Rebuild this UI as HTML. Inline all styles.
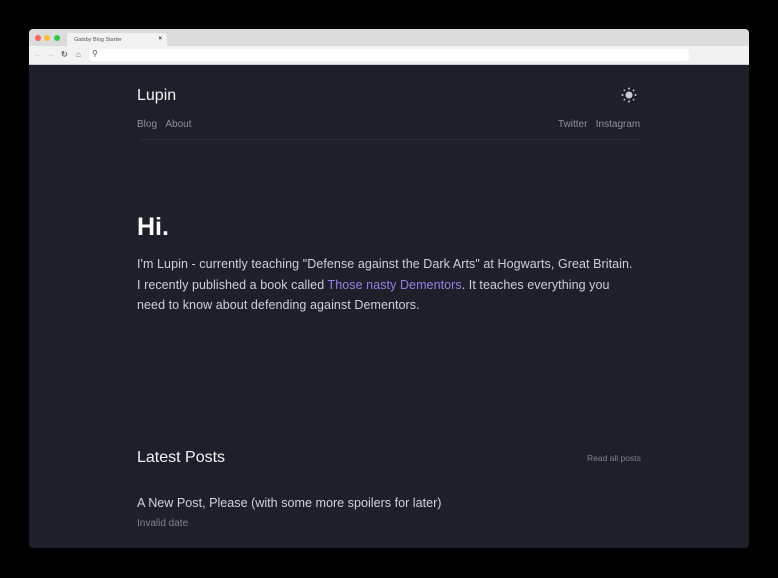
<!DOCTYPE html>
<html><head><style>
*{margin:0;padding:0;box-sizing:border-box}
body{width:778px;height:578px;background:#000;font-family:"Liberation Sans",sans-serif;position:relative;overflow:hidden}
.win{position:absolute;left:29px;top:29px;width:720px;height:519px;background:#1d202b;border-radius:4px;overflow:hidden}
.tabs{height:17px;background:#dcdcdc;position:relative}
.dot{position:absolute;top:6px;width:6px;height:6px;border-radius:50%}
.tab{position:absolute;left:38px;top:4px;width:100px;height:13px;background:#f2f2f2;border-radius:3px 3px 0 0;font-size:5.5px;color:#555;padding:4px 0 0 7px}
.tab b{position:absolute;right:5px;top:3px;font-size:6px;color:#333}
.bar{height:19px;background:#f2f2f2;position:relative;border-bottom:1px solid #ccc}
.url{position:absolute;left:60px;top:3px;width:600px;height:12px;background:#fff;border-radius:3px}
.ic{position:absolute;top:4px;font-size:8px;color:#666}
.a{position:absolute;color:#e6e6e6}
.m{color:#8a909e;font-size:10px}
</style></head><body>
<div class="win">
<div class="tabs">
<div class="dot" style="left:6px;background:#fc605c"></div>
<div class="dot" style="left:15px;background:#fdbc40"></div>
<div class="dot" style="left:25px;background:#34c84a"></div>
<div class="tab">Gatsby Blog Starter<b>×</b></div>
</div>
<div class="bar">
<span class="ic" style="left:5px;color:#bbb">←</span>
<span class="ic" style="left:18px;color:#bbb">→</span>
<span class="ic" style="left:32px;font-weight:bold">↻</span>
<span class="ic" style="left:47px">⌂</span>
<div class="url"><span style="position:absolute;left:3px;top:0;font-size:8px;color:#555">⚲</span></div>
</div>
</div>
<div class="a" style="left:137px;top:87px;font-size:16px;color:#f2f2f2">Lupin</div>
<svg style="position:absolute;left:621px;top:87px" width="16" height="16" viewBox="0 0 16 16"><circle cx="8" cy="8" r="3.5" fill="#c8ccd4"/><g fill="#c8ccd4"><circle cx="8" cy="1.5" r="1"/><circle cx="8" cy="14.5" r="1"/><circle cx="1.5" cy="8" r="1"/><circle cx="14.5" cy="8" r="1"/><circle cx="3.4" cy="3.4" r="0.9"/><circle cx="12.6" cy="3.4" r="0.9"/><circle cx="3.4" cy="12.6" r="0.9"/><circle cx="12.6" cy="12.6" r="0.9"/></g></svg>
<div class="a m" style="left:137px;top:119px">Blog&nbsp;&nbsp;&nbsp;About</div>
<div class="a m" style="left:558px;top:119px">Twitter&nbsp;&nbsp;&nbsp;Instagram</div>
<div style="position:absolute;left:140px;top:139px;width:500px;height:1px;background:#272b38"></div>
<div class="a" style="left:137px;top:213px;font-size:25px;font-weight:bold;color:#fafafa">Hi.</div>
<div class="a" style="left:137px;top:254px;width:530px;font-size:12.5px;line-height:20.5px;color:#ccd0d8;letter-spacing:0.07px">I'm Lupin - currently teaching "Defense against the Dark Arts" at Hogwarts, Great Britain.<br>I recently published a book called <span style="color:#9b7ce6">Those nasty Dementors</span>. It teaches everything you<br>need to know about defending against Dementors.</div>
<div class="a" style="left:137px;top:449px;font-size:16px;color:#f2f2f2">Latest Posts</div>
<div class="a" style="left:587px;top:453px;font-size:8.5px;color:#7d8391">Read all posts</div>
<div class="a" style="left:137px;top:496px;font-size:12.6px;color:#d0d3da">A New Post, Please (with some more spoilers for later)</div>
<div class="a" style="left:137px;top:518px;font-size:10px;color:#7d8391">Invalid date</div>
</body></html>
